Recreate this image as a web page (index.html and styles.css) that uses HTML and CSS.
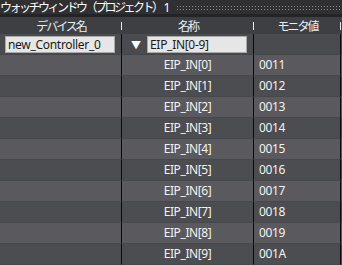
FILE: index.html
```html
<!DOCTYPE html>
<html lang="ja">
<head>
<meta charset="utf-8">
<link rel="stylesheet" href="styles.css">
</head>
<body>
<div class="window">
  <div class="titlebar">
    <span class="title">ウォッチウィンドウ（プロジェクト）<span class="num">1</span></span>
    <span class="grip"></span>
  </div>
  <div class="grid">
    <div class="hcell sep">デバイス名</div>
    <div class="hcell sep">名称</div>
    <div class="hcell sep">モニタ値</div>
    <div class="hcell"></div>

    <div class="fcell line"><span class="input wide">new_Controller_0</span></div>
    <div class="fcell line name-filter"><span class="tri">▼</span><span class="input">EIP_IN[0-9]</span></div>
    <div class="fcell line"></div>
    <div class="fcell"></div>

    <div class="row light"><div class="cell line"></div><div class="cell line center">EIP_IN[0]</div><div class="cell line">0011</div><div class="cell"></div></div>
    <div class="row dark"><div class="cell line"></div><div class="cell line center">EIP_IN[1]</div><div class="cell line">0012</div><div class="cell"></div></div>
    <div class="row light"><div class="cell line"></div><div class="cell line center">EIP_IN[2]</div><div class="cell line">0013</div><div class="cell"></div></div>
    <div class="row dark"><div class="cell line"></div><div class="cell line center">EIP_IN[3]</div><div class="cell line">0014</div><div class="cell"></div></div>
    <div class="row light"><div class="cell line"></div><div class="cell line center">EIP_IN[4]</div><div class="cell line">0015</div><div class="cell"></div></div>
    <div class="row dark"><div class="cell line"></div><div class="cell line center">EIP_IN[5]</div><div class="cell line">0016</div><div class="cell"></div></div>
    <div class="row light"><div class="cell line"></div><div class="cell line center">EIP_IN[6]</div><div class="cell line">0017</div><div class="cell"></div></div>
    <div class="row dark"><div class="cell line"></div><div class="cell line center">EIP_IN[7]</div><div class="cell line">0018</div><div class="cell"></div></div>
    <div class="row light"><div class="cell line"></div><div class="cell line center">EIP_IN[8]</div><div class="cell line">0019</div><div class="cell"></div></div>
    <div class="row dark"><div class="cell line"></div><div class="cell line center">EIP_IN[9]</div><div class="cell line">001A</div><div class="cell"></div></div>
  </div>
</div>
</body>
</html>
```
FILE: styles.css
```css
* { box-sizing: border-box; }
html, body { margin: 0; padding: 0; }
body {
  background: #4b4c50;
  font-family: "Noto Sans", "Noto Sans CJK JP", sans-serif;
  font-size: 12px;
  color: #f2f2f2;
  width: 342px;
  height: 265px;
  overflow: hidden;
}
.titlebar {
  height: 17px;
  background: #303033;
  border-bottom: 3px solid #232426;
  display: flex;
  align-items: flex-start;
  gap: 4px;
}
.title {
  font-family: "Noto Sans CJK JP", sans-serif;
  font-size: 12px;
  line-height: 14px;
  letter-spacing: -2.5px;
  color: #ffffff;
  padding-right: 2px;
  white-space: nowrap;
}
.title .num {
  font-family: "Noto Sans", sans-serif;
  letter-spacing: 0;
  margin-left: 2px;
}
.grip {
  flex: 1;
  height: 5px;
  margin-top: 5px;
  background-image: radial-gradient(circle, #8a8a8c 0.7px, transparent 1px);
  background-size: 3px 3px;
}
.grid {
  display: grid;
  grid-template-columns: 122px 132px 87px 1fr;
}
.row { display: contents; }
.hcell {
  height: 17px;
  background: #3e3f43;
  font-family: "Noto Sans CJK JP", sans-serif;
  color: #e6eefa;
  font-size: 12px;
  letter-spacing: -2px;
  line-height: 17px;
  text-align: center;
  position: relative;
}
.hcell.sep::after {
  content: "";
  position: absolute;
  right: 0;
  top: 5px;
  width: 1px;
  height: 8px;
  background: #e8e8e8;
}
.fcell {
  height: 21px;
  background: #4a4b4f;
  border-bottom: 1px solid #444549;
  display: flex;
  align-items: center;
}
.line { border-right: 1px solid #0a0a0a; }
.input {
  height: 17px;
  background: #e6e6e6;
  border: 1px solid #a9a9a9;
  color: #1a1a1a;
  font-size: 12px;
  letter-spacing: -0.3px;
  line-height: 15px;
  padding-left: 2px;
  width: 100px;
  white-space: nowrap;
  overflow: hidden;
}
.input.wide { margin-left: 5px; width: 110px; }
.name-filter { padding-left: 9px; }
.tri {
  color: #ffffff;
  font-size: 10px;
  width: 16px;
}
.cell {
  height: 21px;
  line-height: 20px;
  border-bottom: 1px solid #47484c;
  padding-left: 5px;
  letter-spacing: -0.4px;
  white-space: nowrap;
}
.cell.center { text-align: center; padding-left: 0; }
.light .cell { background: #5a5a5e; }
.dark .cell { background: #4c4d51; }
```
